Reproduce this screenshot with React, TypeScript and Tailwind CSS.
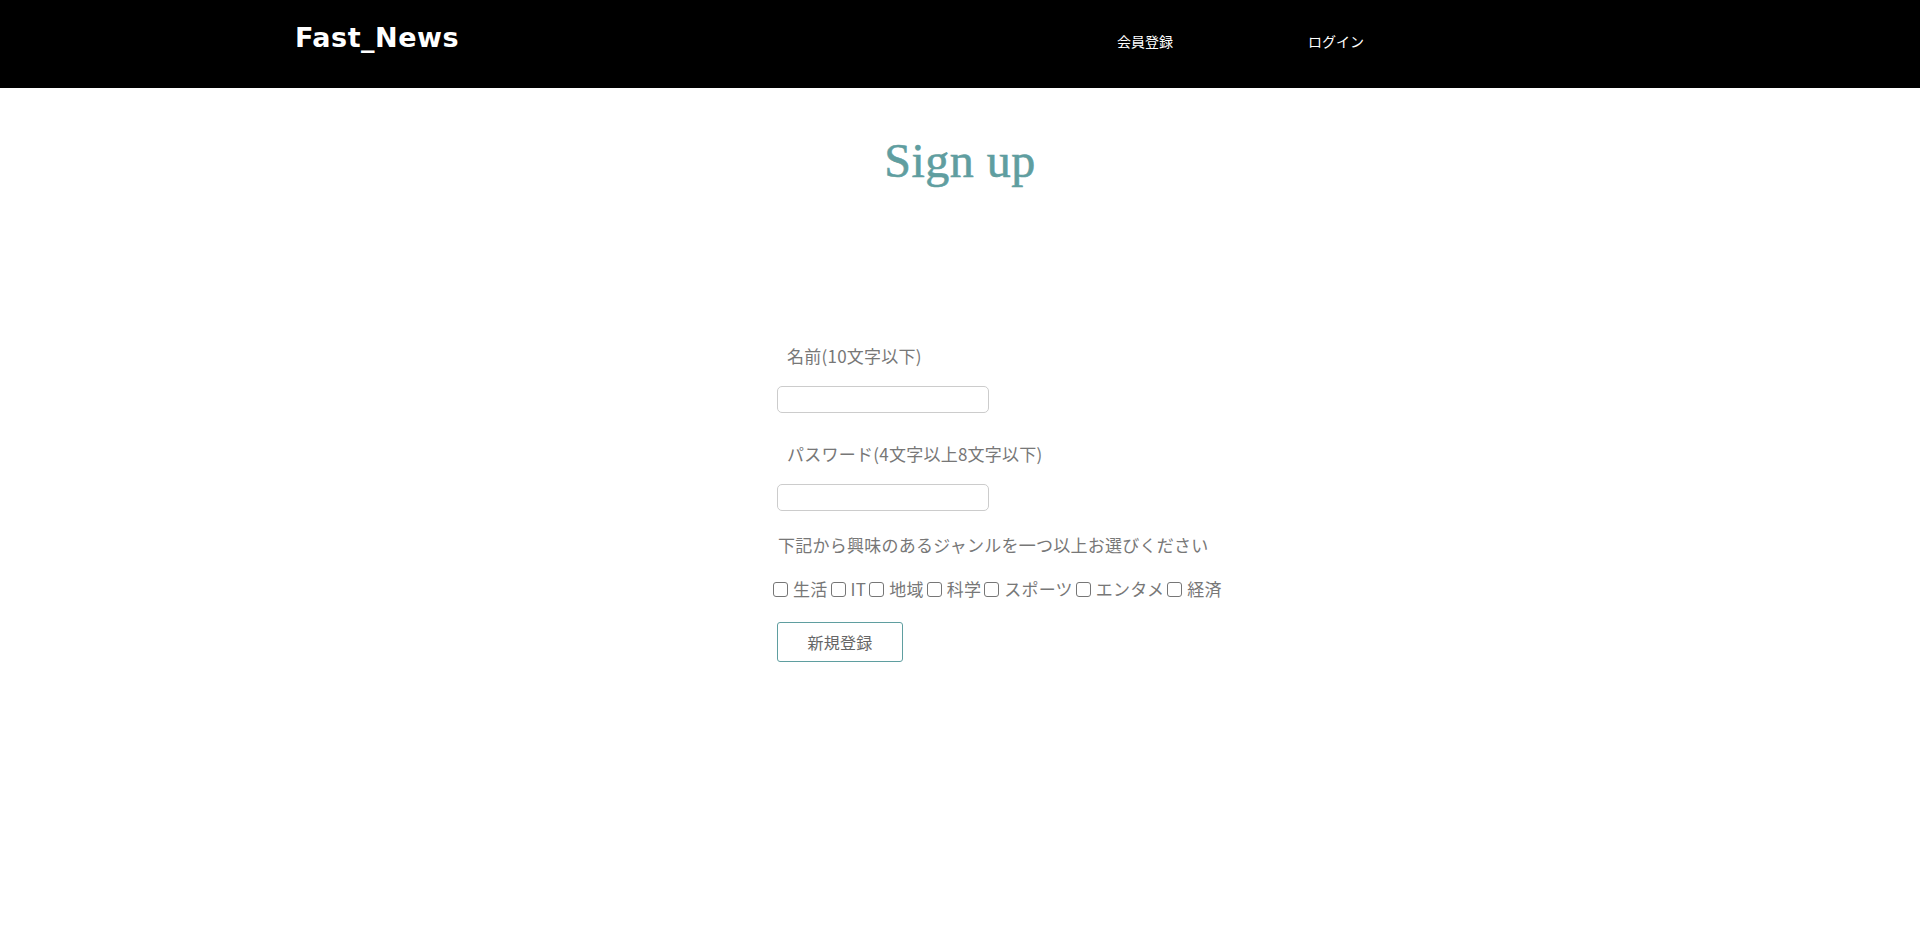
import React from "react";

const jp = "font-['Noto_Sans_CJK_JP','Noto_Sans',sans-serif]";

function Box() {
  return (
    <span className="inline-block w-[15px] h-[15px] border border-[#767676] rounded-[3px] bg-white shrink-0" />
  );
}

export default function App() {
  const genres = ["生活", "IT", "地域", "科学", "スポーツ", "エンタメ", "経済"];
  return (
    <div className="min-h-[936px] bg-white">
      <header className="h-[88px] bg-black">
        <div className="mx-auto w-[1330px] flex items-start">
          <h1 className="pt-[22px] text-[27px] leading-[32px] font-bold text-white font-['DejaVu_Sans',sans-serif] tracking-[0.5px]">
            Fast_News
          </h1>
          <nav className={`ml-[658px] pt-[31px] flex gap-[135px] text-[14px] leading-[20px] text-white ${jp}`}>
            <a className="w-[56px]">会員登録</a>
            <a>ログイン</a>
          </nav>
        </div>
      </header>

      <main className="flex flex-col items-center">
        <h2 className="mt-[45px] text-[48px] leading-[56px] text-[#5f9ea0] font-['Liberation_Serif',serif] tracking-[0.5px] [-webkit-text-stroke:0.6px_#5f9ea0]">
          Sign up
        </h2>

        <form className={`mt-[155px] w-[366px] flex flex-col text-[17px] text-[#777] whitespace-nowrap tracking-[0.25px] ${jp}`}>
          <label className="pl-[10px] leading-[24px]">名前(10文字以下)</label>
          <input className="mt-[18px] w-[212px] h-[27px] border border-[#ccc] rounded-[5px] outline-none" />
          <label className="mt-[29px] pl-[10px] leading-[24px]">パスワード(4文字以上8文字以下)</label>
          <input type="password" className="mt-[18px] w-[212px] h-[27px] border border-[#ccc] rounded-[5px] outline-none" />
          <p className="mt-[22px] leading-[24px] pl-[1px]">下記から興味のあるジャンルを一つ以上お選びください</p>
          <div className="mt-[20px] -ml-[4px] flex items-center leading-[24px]">
            {genres.map((g, i) => (
              <span key={g} className={`flex items-center ${i > 0 ? "ml-[3px]" : ""}`}>
                <Box />
                <span className="ml-[5px]">{g}</span>
              </span>
            ))}
          </div>
          <button
            type="button"
            className="mt-[21px] w-[126px] h-[40px] border border-[#5f9ea0] rounded-[3px] bg-white text-[16px] text-[#666]"
          >
            新規登録
          </button>
        </form>
      </main>
    </div>
  );
}
